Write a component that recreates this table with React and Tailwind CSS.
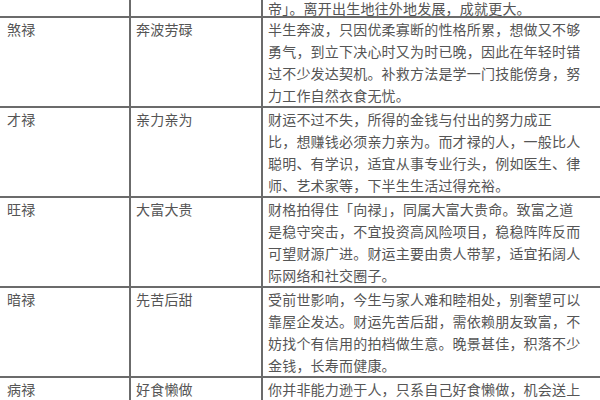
const rows = [
  {
    name: "煞禄",
    trait: "奔波劳碌",
    lines: [
      "半生奔波，只因优柔寡断的性格所累，想做又不够",
      "勇气，到立下决心时又为时已晚，因此在年轻时错",
      "过不少发达契机。补救方法是学一门技能傍身，努",
      "力工作自然衣食无忧。",
    ],
  },
  {
    name: "才禄",
    trait: "亲力亲为",
    lines: [
      "财运不过不失，所得的金钱与付出的努力成正",
      "比，想赚钱必须亲力亲为。而才禄的人，一般比人",
      "聪明、有学识，适宜从事专业行头，例如医生、律",
      "师、艺术家等，下半生生活过得充裕。",
    ],
  },
  {
    name: "旺禄",
    trait: "大富大贵",
    lines: [
      "财格拍得住「向禄」，同属大富大贵命。致富之道",
      "是稳守突击，不宜投资高风险项目，稳稳阵阵反而",
      "可望财源广进。财运主要由贵人带挈，适宜拓阔人",
      "际网络和社交圈子。",
    ],
  },
  {
    name: "暗禄",
    trait: "先苦后甜",
    lines: [
      "受前世影响，今生与家人难和睦相处，别奢望可以",
      "靠屋企发达。财运先苦后甜，需依赖朋友致富，不",
      "妨找个有信用的拍档做生意。晚景甚佳，积落不少",
      "金钱，长寿而健康。",
    ],
  },
  {
    name: "病禄",
    trait: "好食懒做",
    lines: ["你并非能力逊于人，只系自己好食懒做，机会送上", "", "", ""],
  },
];

const Row = ({ name, trait, lines }) => (
  <div className="grid grid-cols-[131px_132px_1fr] border-b-2 border-[#6b6b6b]">
    <div className="border-r-2 border-[#6b6b6b] pl-[7px] leading-[22px]">{name}</div>
    <div className="border-r-2 border-[#6b6b6b] pl-[5px] leading-[22px]">{trait}</div>
    <div className="pl-[5px] leading-[22px]">
      {lines.map((l, i) => (
        <div key={i} className="h-[22px] whitespace-nowrap">
          {l}
        </div>
      ))}
    </div>
  </div>
);

export default function App() {
  return (
    <div
      className="w-[600px] h-[400px] overflow-hidden bg-white text-[14px] text-[#555555] tracking-[0.2px]"
      style={{ fontFamily: '"Noto Sans CJK SC", "Noto Sans", sans-serif' }}
    >
      <div className="grid grid-cols-[131px_132px_1fr] h-[18px] border-b-2 border-[#6b6b6b] overflow-hidden">
        <div className="border-r-2 border-[#6b6b6b]"></div>
        <div className="border-r-2 border-[#6b6b6b]"></div>
        <div className="pl-[5px] leading-[16px] whitespace-nowrap">
          帝」。离开出生地往外地发展，成就更大。
        </div>
      </div>
      {rows.map((r) => (
        <Row key={r.name} {...r} />
      ))}
    </div>
  );
}
